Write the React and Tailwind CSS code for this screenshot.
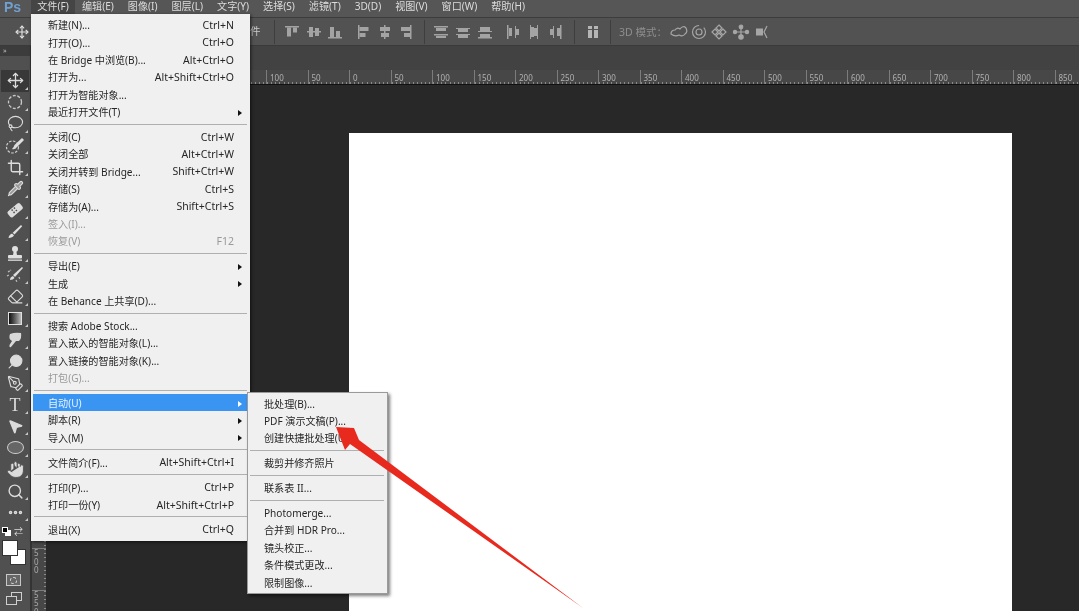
import React from 'react';
import { Move, Lasso, Crop, Pipette, Eraser, Search, PenTool, Hand, MousePointer2, Ellipsis } from 'lucide-react';

const FONT = "font-['Noto_Sans','Noto_Sans_CJK_SC',sans-serif]";

const FILE_MENU = [
  [['新建(N)...', 'Ctrl+N'], ['打开(O)...', 'Ctrl+O'], ['在 Bridge 中浏览(B)...', 'Alt+Ctrl+O'], ['打开为...', 'Alt+Shift+Ctrl+O'], ['打开为智能对象...'], ['最近打开文件(T)', '', 'sub']],
  [['关闭(C)', 'Ctrl+W'], ['关闭全部', 'Alt+Ctrl+W'], ['关闭并转到 Bridge...', 'Shift+Ctrl+W'], ['存储(S)', 'Ctrl+S'], ['存储为(A)...', 'Shift+Ctrl+S'], ['签入(I)...', '', 'off'], ['恢复(V)', 'F12', 'off']],
  [['导出(E)', '', 'sub'], ['生成', '', 'sub'], ['在 Behance 上共享(D)...']],
  [['搜索 Adobe Stock...'], ['置入嵌入的智能对象(L)...'], ['置入链接的智能对象(K)...'], ['打包(G)...', '', 'off']],
  [['自动(U)', '', 'active'], ['脚本(R)', '', 'sub'], ['导入(M)', '', 'sub']],
  [['文件简介(F)...', 'Alt+Shift+Ctrl+I']],
  [['打印(P)...', 'Ctrl+P'], ['打印一份(Y)', 'Alt+Shift+Ctrl+P']],
  [['退出(X)', 'Ctrl+Q']],
];

const AUTO_MENU = [
  ['批处理(B)...', 'PDF 演示文稿(P)...', '创建快捷批处理(U)...'],
  ['裁剪并修齐照片'],
  ['联系表 II...'],
  ['Photomerge...', '合并到 HDR Pro...', '镜头校正...', '条件模式更改...', '限制图像...'],
];

const TOP_MENU = ['编辑(E)', '图像(I)', '图层(L)', '文字(Y)', '选择(S)', '滤镜(T)', '3D(D)', '视图(V)', '窗口(W)', '帮助(H)'];

// labels left of x=250 sit behind the open menu, so those cells stay blank
const RULER_TOP = ['', '', '', '', '', 100, 50, 0, 50, 100, 150, 200, 250, 300, 350, 400, 450, 500, 550, 600, 650, 700, 750, 800, 850];
const RULER_LEFT = ['', '', '', '', '', '', '', '', '', '', '', '500', '550'];

// each align icon is a few bars on a 16x16 box
const ALIGN_ICONS = [
  { ml: 'ml-[9px]', rects: [[1, 2, 14, 1.5], [3, 3.5, 4, 9], [9, 3.5, 4, 5]] },
  { ml: 'ml-[6px]', rects: [[1, 7, 14, 1.5], [3, 3, 4, 10], [9, 4, 4, 8]] },
  { ml: 'ml-[5px]', rects: [[1, 13, 14, 1.5], [3, 3, 4, 10], [9, 7, 4, 6]] },
  { ml: 'ml-[13px]', rects: [[2, 1, 1.5, 14], [3.5, 3, 9, 4], [3.5, 9, 6, 4]] },
  { ml: 'ml-[5px]', rects: [[7, 1, 1.5, 14], [3, 3, 10, 4], [4, 9, 8, 4]] },
  { ml: 'ml-[5px]', rects: [[12, 1, 1.5, 14], [3, 3, 9, 4], [6, 9, 6, 4]] },
  { ml: 'ml-[8px]', rects: [[1, 2, 14, 1.5], [3, 4, 10, 3], [1, 10, 14, 1.5], [3, 12, 10, 2]] },
  { ml: 'ml-[6px]', rects: [[1, 4, 14, 1], [3, 5, 10, 3], [1, 10, 14, 1], [3, 11, 10, 3]] },
  { ml: 'ml-[6px]', rects: [[1, 7, 14, 1], [3, 3, 10, 4], [1, 13, 14, 1.5], [3, 10, 10, 3]] },
  { ml: 'ml-[12px]', rects: [[2, 1, 1.5, 14], [4, 4, 3, 8], [10, 2, 1, 12], [11, 5, 3, 6]] },
  { ml: 'ml-[5px]', rects: [[4, 1, 1, 14], [5, 3, 3, 10], [11, 1, 1, 14], [8, 4, 3, 8]] },
  { ml: 'ml-[6px]', rects: [[5, 2, 1, 12], [2, 5, 3, 6], [12, 1, 1.5, 14], [9, 4, 3, 8]] },
];

function AlignIcon({ ml, rects }) {
  return (
    <svg width="16" height="16" viewBox="0 0 16 16" className={`${ml} shrink-0`} fill="#a3a3a3">
      {rects.map((r, i) => <rect key={i} x={r[0]} y={r[1]} width={r[2]} height={r[3]} />)}
    </svg>
  );
}

function Sep({ ml }) {
  return <div className={`h-[24px] w-px bg-[#3e3e3e] shrink-0 ${ml}`} />;
}

function Row({ label, right, state }) {
  const color = state === 'off' ? 'text-[#9a9a9a]' : state === 'active' ? 'text-[#e8f3ff] bg-[#3a94f2]' : 'text-[#262626]';
  return (
    <div className={`relative flex h-[17.4px] items-center justify-between pl-[15px] pr-[13px] pt-[2px] ml-[2px] mr-[3px] ${color}`}>
      <span className="whitespace-pre text-[10.1px]">{label}</span>
      {right && <span>{right}</span>}
      {(state === 'sub' || state === 'active') && (
        <span className={`absolute right-[5px] h-0 w-0 border-y-[3.5px] border-l-[4px] border-y-transparent ${state === 'active' ? 'border-l-white' : 'border-l-[#111]'}`} />
      )}
    </div>
  );
}

function MenuSep() {
  return (
    <div className="flex h-[7.5px] items-center px-[3px]">
      <div className="h-px w-full bg-[#b0b0b0]" />
    </div>
  );
}

function FileMenu() {
  return (
    <div className="absolute left-[31px] top-[14px] z-10 w-[219px] bg-[#f0f0f0] pt-[2px] pb-[2.7px] text-[10.5px] shadow-[1px_1px_3px_rgba(0,0,0,0.6)]">
      {FILE_MENU.map((group, i) => (
        <div key={i}>
          {i > 0 && <MenuSep />}
          {group.map((item) => <Row key={item[0]} label={item[0]} right={item[1]} state={item[2]} />)}
        </div>
      ))}
    </div>
  );
}

function AutoMenu() {
  return (
    <div className="absolute left-[247px] top-[392px] z-20 w-[141px] border border-[#9a9a9a] bg-[#f0f0f0] pt-[1.5px] pb-[2px] text-[10.5px] shadow-[2px_2px_3px_rgba(0,0,0,0.5)]">
      {AUTO_MENU.map((group, i) => (
        <div key={i} className="-ml-[1px]">
          {i > 0 && <MenuSep />}
          {group.map((t) => <Row key={t} label={t} />)}
        </div>
      ))}
    </div>
  );
}

function QuickSelect() {
  return (
    <svg width="20" height="20" viewBox="0 0 20 20" fill="none">
      <circle cx="7.5" cy="11" r="6" stroke="#cfcfcf" strokeWidth="1.2" strokeDasharray="2.5 1.5" />
      <path d="M17 2 L19 4 L12 11 Q10 14 7 13 Q9 11 9.5 9 Z" fill="#dedede" />
    </svg>
  );
}

function Marquee() {
  return (
    <svg width="20" height="20" viewBox="0 0 20 20" fill="none">
      <circle cx="10" cy="10" r="6.5" stroke="#c9c9c9" strokeWidth="1.3" strokeDasharray="3 1.6" />
    </svg>
  );
}

function HealingBrush() {
  return (
    <svg width="20" height="20" viewBox="0 0 20 20">
      <rect x="2" y="6.5" width="16" height="7.5" rx="2" transform="rotate(-40 10 10)" fill="#dcdcdc" />
      <g transform="rotate(-40 10 10)" fill="#505050">
        <rect x="7" y="7.5" width="1.5" height="1.5" /><rect x="10" y="7.5" width="1.5" height="1.5" />
        <rect x="7" y="10.5" width="1.5" height="1.5" /><rect x="10" y="10.5" width="1.5" height="1.5" />
      </g>
    </svg>
  );
}

function Brush() {
  return (
    <svg width="20" height="20" viewBox="0 0 20 20">
      <path d="M16 3 L17.2 4.2 L9.5 12.5 L7.7 10.7 Z" fill="#e0e0e0" />
      <path d="M7 11.5 Q4 12.5 3.5 16 Q7.5 16 9 13.3 Z" fill="#e0e0e0" />
    </svg>
  );
}

function StampTool() {
  return (
    <svg width="20" height="20" viewBox="0 0 20 20" fill="#e0e0e0">
      <circle cx="10" cy="5" r="3" />
      <path d="M8.7 7 H11.3 L12 11 H8 Z" />
      <rect x="3" y="11" width="14" height="3.5" rx="1" />
      <rect x="3" y="15.5" width="14" height="1.3" />
    </svg>
  );
}

function GradientTool() {
  return (
    <div className="h-[13px] w-[14px] border border-[#e0e0e0] bg-gradient-to-r from-[#111] to-[#bdbdbd]" />
  );
}

function Smudge() {
  return (
    <svg width="20" height="20" viewBox="0 0 20 20">
      <path d="M5 4 Q10 2 16 3 Q17 8 14 11 L11 11 L6 17 Q4 18 4.5 15 L7 11 Q3 9 5 4 Z" fill="#d9d9d9" />
    </svg>
  );
}

function HistoryBrush() {
  return (
    <svg width="20" height="20" viewBox="0 0 20 20" fill="none">
      <path d="M17 2 L18 3 L10 12 L8 10 Z" fill="#dedede" />
      <path d="M8 11 Q5 12 5 15 Q8 15 9.5 13 Z" fill="#dedede" />
      <path d="M3 7 L6 5 M2 11 L4 10 M14 12 L15 15 M11 15 L12 17" stroke="#bdbdbd" strokeWidth="1.3" strokeDasharray="2 1" />
    </svg>
  );
}

function EllipseTool() {
  return <div className="h-[13px] w-[17px] rounded-[50%] border-[1.5px] border-[#cfcfcf] bg-[#666]" />;
}

function lucide(Icon, extra = {}) {
  return () => <Icon size={17} color="#dcdcdc" strokeWidth={1.6} {...extra} />;
}

const TOOLS = [
  lucide(Move, { strokeWidth: 1.8 }), Marquee, lucide(Lasso), QuickSelect, lucide(Crop, { strokeWidth: 2 }), lucide(Pipette, { fill: '#9a9a9a' }),
  HealingBrush, Brush, StampTool, HistoryBrush, lucide(Eraser),
  GradientTool, Smudge, lucide(Search, { fill: '#dcdcdc', className: '-scale-x-100' }), lucide(PenTool), () => <span className="font-['Liberation_Serif',serif] text-[18px] leading-none text-[#dcdcdc]">T</span>,
  lucide(MousePointer2, { fill: '#dcdcdc' }), EllipseTool, lucide(Hand, { fill: '#dcdcdc', strokeWidth: 1.2, color: '#535353', size: 19 }), lucide(Search, { strokeWidth: 2 }), lucide(Ellipsis, { strokeWidth: 3 }),
];

function Toolbar() {
  return (
    <div className="flex w-[30px] shrink-0 flex-col bg-[#505050]">
      <div className="h-[10px] bg-[#3c3c3c] pl-[3px] text-[7px] leading-[10px] text-[#bbb]">»</div>
      <div className="h-[14px]" />
      {TOOLS.map((Tool, i) => (
        <div key={i} className={`relative mx-[1px] flex h-[21.6px] items-center justify-center ${i === 0 ? 'bg-[#383838]' : ''}`}>
          <Tool />
          <span className="absolute bottom-[2px] right-[1px] h-0 w-0 border-b-[3px] border-l-[3px] border-b-[#c8c8c8] border-l-transparent" />
        </div>
      ))}
      <div className="mt-[3px] flex h-[11px] items-center gap-[3px] pl-[2px]">
        <div className="relative h-[9px] w-[9px]">
          <div className="absolute bottom-0 right-0 h-[6px] w-[6px] border border-white bg-white" />
          <div className="absolute left-0 top-0 h-[6px] w-[6px] border border-white bg-black" />
        </div>
        <span className="text-[9px] leading-none text-[#ddd]">⇄</span>
      </div>
      <div className="relative ml-[2px] mt-[3px] h-[25px] w-[24px]">
        <div className="absolute bottom-0 right-0 h-[16px] w-[16px] border border-[#333] bg-white" />
        <div className="absolute left-0 top-0 h-[16px] w-[16px] border border-[#333] bg-white" />
      </div>
      <div className="ml-[6px] mt-[9px] flex h-[12px] w-[15px] items-center justify-center border border-[#c8c8c8] bg-[#666]">
        <div className="h-[7px] w-[7px] rounded-full border border-dashed border-[#ddd]" />
      </div>
      <svg width="18" height="16" viewBox="0 0 18 16" fill="none" stroke="#cfcfcf" className="ml-[5px] mt-[5px]">
        <rect x="6.5" y="1.5" width="10" height="8" />
        <rect x="1.5" y="5.5" width="10" height="8" fill="#505050" />
      </svg>
    </div>
  );
}

function RulerTop() {
  return (
    <div className="flex h-[15px] items-end overflow-hidden border-b border-[#111] bg-[#474747] pl-[12.5px]">
      {RULER_TOP.map((n, i) => (
        <div key={i} className="relative h-[14px] w-[41.5px] shrink-0 border-l border-[#7c7c7c]">
          <span className="absolute left-[3px] top-[3px] text-[8px] leading-[10px] text-[#b0b0b0]">{n}</span>
          <div className="absolute bottom-0 left-0 h-[2px] w-full bg-[repeating-linear-gradient(90deg,#8a8a8a_0,#8a8a8a_1px,transparent_1px,transparent_4.15px)]" />
        </div>
      ))}
    </div>
  );
}

function RulerLeft() {
  return (
    <div className="w-[14px] shrink-0 overflow-hidden bg-[#474747] pt-[6.5px]">
      {RULER_LEFT.map((n, k) => (
        <div key={k} className="relative flex h-[41.5px] flex-col border-t border-[#7c7c7c] pl-[2px] text-[8px] leading-[8.5px] text-[#aaa]">
          {n.split('').map((d, i) => <div key={i} className="h-[8.5px]">{d}</div>)}
          <div className="absolute inset-y-0 right-0 w-[2px] bg-[repeating-linear-gradient(180deg,#8a8a8a_0,#8a8a8a_1px,transparent_1px,transparent_4.15px)]" />
        </div>
      ))}
    </div>
  );
}

export default function App() {
  return (
    <div className={`relative flex h-[611px] w-[1079px] flex-col overflow-hidden bg-[#282828] blur-[0.4px] ${FONT}`}>
      <div className="flex h-[18px] shrink-0 items-center border-b border-[#3d3d3d] bg-[#565656] text-[10.1px] text-[#dcdcdc]">
        <span className="ml-[4px] -mt-[3px] w-[27px] font-['Liberation_Sans',sans-serif] text-[14px] font-bold leading-none text-[#6fa0cf]">Ps</span>
        <span className="flex h-full w-[44px] items-center justify-center bg-[#454545] pb-[3px]">文件(F)</span>
        <div className="ml-[7px] flex gap-[14px] pb-[3px]">
          {TOP_MENU.map((t) => <span key={t}>{t}</span>)}
        </div>
      </div>

      <div className="flex h-[28px] shrink-0 items-center border-b border-[#3a3a3a] bg-[#525252]">
        <Move size={14} color="#e0e0e0" strokeWidth={2} className="ml-[15px]" />
        <span className="ml-[221px] w-[12px] text-[10.5px] text-[#c8c8c8]">件</span>
        <Sep ml="ml-[12px]" />
        {ALIGN_ICONS.slice(0, 6).map((a, i) => <AlignIcon key={i} {...a} />)}
        <Sep ml="ml-[10px]" />
        {ALIGN_ICONS.slice(6, 12).map((a, i) => <AlignIcon key={i} {...a} />)}
        <Sep ml="ml-[10px]" />
        <svg width="10" height="12" viewBox="0 0 10 12" fill="#b5b5b5" className="ml-[13px]">
          <rect width="4" height="3" /><rect y="4" width="4" height="8" /><rect x="6" width="4" height="3" /><rect x="6" y="4" width="4" height="8" />
        </svg>
        <Sep ml="ml-[12px]" />
        <span className="ml-[8px] whitespace-pre pt-[2px] text-[10.5px] text-[#8e8e8e]">3D 模式：</span>
        <svg width="108" height="18" viewBox="0 0 108 18" fill="none" stroke="#a6a6a6" strokeWidth="1.2" className="ml-[2px]">
          <path d="M2 11 Q2 7 6 7 Q8 4 11 6 Q14 2 17 5 Q19 9 16 11 Q14 14 10 12 Q6 14 2 11 Z" />
          <circle cx="30" cy="9" r="6.5" strokeDasharray="30 5" />
          <circle cx="30" cy="9" r="3" />
          <path d="M50 2 L53 5 L50 8 L47 5 Z M50 10 L53 13 L50 16 L47 13 Z M46 6 L49 9 L46 12 L43 9 Z M54 6 L57 9 L54 12 L51 9 Z" />
          <path d="M66 9 L78 9 M72 4 L72 14" />
          <circle cx="72" cy="4" r="1.8" fill="#a6a6a6" /><circle cx="72" cy="14" r="2.2" fill="#a6a6a6" /><circle cx="66" cy="9" r="1.6" fill="#a6a6a6" /><circle cx="78" cy="9" r="1.6" fill="#a6a6a6" />
          <rect x="87" y="5.5" width="7" height="7" fill="#a6a6a6" stroke="none" />
          <path d="M98 3 L95 9 L98 15" />
        </svg>
      </div>

      <div className="flex min-h-0 flex-1">
        <Toolbar />
        <div className="w-[2px] shrink-0 bg-[#333]" />
        <div className="flex min-w-0 flex-1 flex-col">
          <div className="h-[24px] shrink-0 bg-[#424242]" />
          <div className="shrink-0 pl-[14px]"><RulerTop /></div>
          <div className="flex min-h-0 flex-1">
            <RulerLeft />
            <div className="flex min-h-0 flex-1 pl-[303px] pt-[48px]">
              <div className="w-[663px] bg-white" />
            </div>
          </div>
        </div>
      </div>

      <FileMenu />
      <AutoMenu />

      <svg className="pointer-events-none absolute left-0 top-0 z-30" width="1079" height="611" viewBox="0 0 1079 611">
        <polygon points="336,427 354,428 359,440 583,608 350,444 345,450" fill="#e82a1e" />
      </svg>
    </div>
  );
}
